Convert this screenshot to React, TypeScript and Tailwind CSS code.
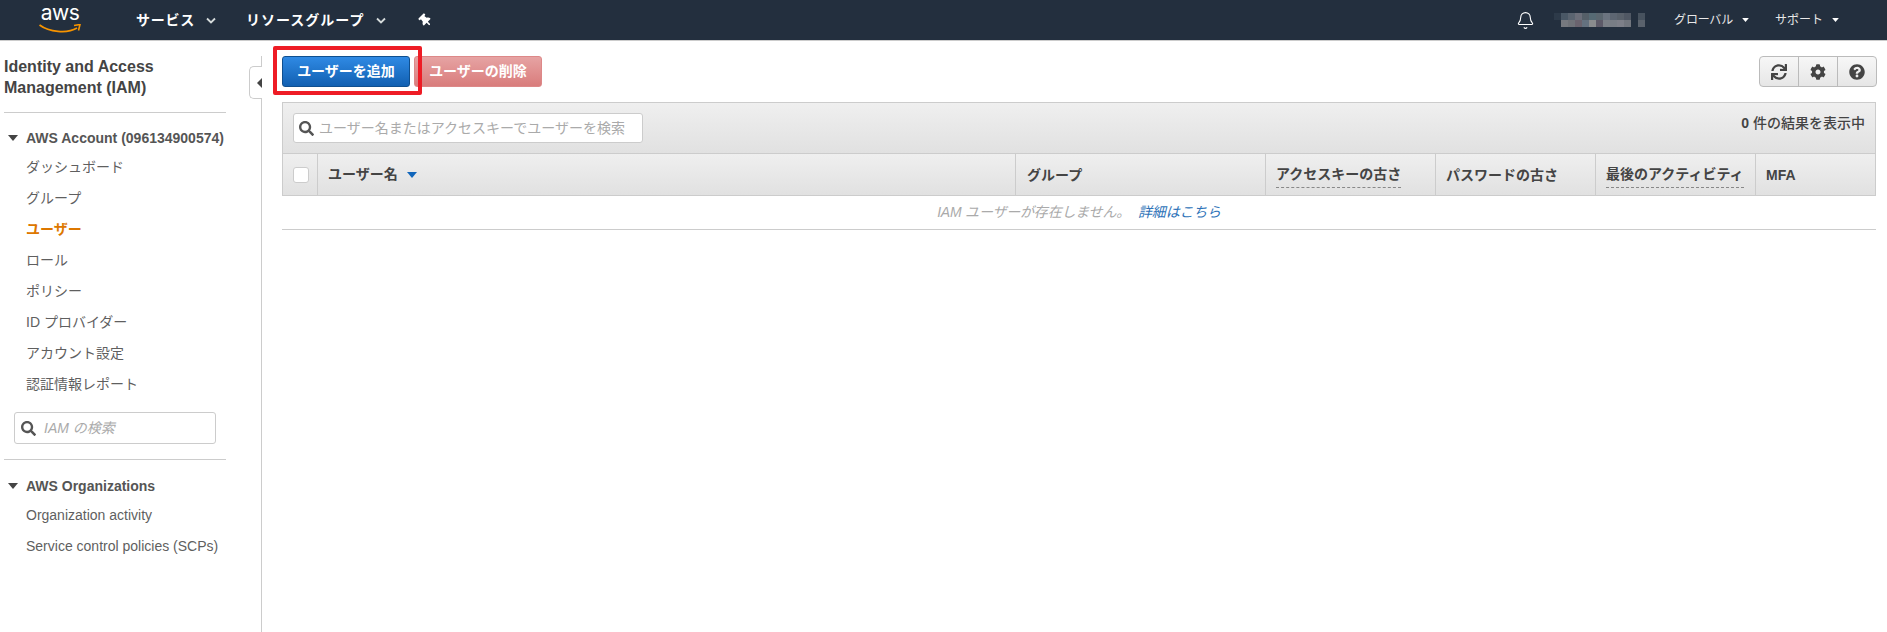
import React from "react";
import { FaSync, FaCog, FaQuestionCircle, FaSearch, FaThumbtack } from "react-icons/fa";
import { Bell } from "lucide-react";

const row1 = ["#2d3a49", "#4a5866", "#5a6470", "#6b6e79", "#555f68", "#566a74", "#5b6770", "#6b7480", "#5d6672", "#59616b", "#505864", "#232f3e", "#47525e"];
const row2 = ["#232f3e", "#76797f", "#6f7278", "#6a636e", "#64717f", "#8a8c8e", "#5d5a68", "#7b7f86", "#787d85", "#7d7f88", "#72767e", "#232f3e", "#5a626c"];

function Caret({ className }: { className: string }) {
  return (
    <svg width="10" height="6" viewBox="0 0 10 6" className={className}>
      <path d="M0 0 H10 L5 6 Z" fill="currentColor" />
    </svg>
  );
}

function Chevron() {
  return (
    <svg width="10" height="7" viewBox="0 0 10 7" className="text-[#d5dbdb]">
      <path d="M1 1.5 L5 5.5 L9 1.5" fill="none" stroke="currentColor" strokeWidth="1.8" />
    </svg>
  );
}

function Header() {
  return (
    <header className="flex h-[41px] items-center border-b border-[#ccc] bg-[#232f3e] text-white">
      <div className="ml-[39px] -mt-[5px] flex w-[42px] flex-col items-center">
        <span className="font-['Inter',sans-serif] text-[21px] leading-[24px] tracking-[-0.6px] text-white">aws</span>
        <svg width="42" height="10" viewBox="0 0 42 10" className="-mt-[1px]">
          <path d="M0.5 1 C10 8 28 10 38 4" fill="none" stroke="#f79400" strokeWidth="1.8" />
          <path d="M35 1.5 L41 0.5 L39.5 6.5" fill="none" stroke="#f79400" strokeWidth="1.6" />
        </svg>
      </div>
      <span className="ml-[55px] text-[14px] font-bold tracking-[0.75px] text-white">サービス</span>
      <span className="ml-[11px]"><Chevron /></span>
      <span className="ml-[30px] text-[14px] font-bold tracking-[1px] text-white">リソースグループ</span>
      <span className="ml-[12px]"><Chevron /></span>
      <FaThumbtack className="ml-[33px] -rotate-45 text-[13px] text-white" />
      <Bell size={19} strokeWidth={1.4} className="ml-auto text-white" />
      <svg width="91" height="14" viewBox="0 0 91 14" className="ml-[19px]">
        {row1.map((c, i) => <rect key={i} x={i * 7} y="0" width="7" height="7" fill={c} />)}
        {row2.map((c, i) => <rect key={i} x={i * 7} y="7" width="7" height="7" fill={c} />)}
      </svg>
      <span className="ml-[29px] text-[12px] tracking-[-0.2px] text-[#e8e8e8]">グローバル</span>
      <Caret className="ml-[9px] h-[4px] w-[7px] text-white" />
      <span className="ml-[26px] text-[12px] text-[#e8e8e8]">サポート</span>
      <Caret className="ml-[9px] mr-[48px] h-[4px] w-[7px] text-white" />
    </header>
  );
}

function NavItem({ label, active }: { label: string; active?: boolean }) {
  return (
    <div className={`flex h-[31px] items-center pl-[26px] text-[14px] ${active ? "font-bold text-[#dd7700]" : "text-[#5f5f5f]"}`}>
      {label}
    </div>
  );
}

function Sidebar() {
  return (
    <aside className="w-[261px] shrink-0 pt-[15px]">
      <div className="ml-[4px] w-[222px] pb-[14px] text-[16px] font-bold leading-[21px] text-[#444]">
        Identity and Access<br />Management (IAM)
      </div>
      <div className="ml-[4px] w-[222px] border-t border-[#ccc]" />
      <div className="flex h-[49px] items-center pl-[8px] pt-[1px] text-[14px] font-bold text-[#555]">
        <Caret className="mr-[8px] h-[6px] w-[10px] text-[#444]" />
        <span className="whitespace-nowrap">AWS Account (096134900574)</span>
      </div>
      <div className="-mt-[10px]">
        <NavItem label="ダッシュボード" />
        <NavItem label="グループ" />
        <NavItem label="ユーザー" active />
        <NavItem label="ロール" />
        <NavItem label="ポリシー" />
        <NavItem label="ID プロバイダー" />
        <NavItem label="アカウント設定" />
        <NavItem label="認証情報レポート" />
      </div>
      <div className="ml-[14px] mt-[12px] flex h-[32px] w-[202px] items-center rounded-[3px] border border-[#ccc] pl-[6px]">
        <FaSearch className="text-[15px] text-[#555]" />
        <span className="ml-[8px] text-[14px] italic text-[#aaa]">IAM の検索</span>
      </div>
      <div className="ml-[4px] mt-[15px] w-[222px] border-t border-[#ccc]" />
      <div className="flex h-[52px] items-center pl-[8px] text-[14px] font-bold text-[#555]">
        <Caret className="mr-[8px] h-[6px] w-[10px] text-[#444]" />
        <span>AWS Organizations</span>
      </div>
      <div className="-mt-[12px]">
        <NavItem label="Organization activity" />
        <NavItem label="Service control policies (SCPs)" />
      </div>
    </aside>
  );
}

function Col({ label, width, dashed, last, pad }: { label: string; width: string; dashed?: boolean; last?: boolean; pad?: string }) {
  return (
    <div className={`flex h-full items-center ${pad ?? "pl-[10px]"} ${width} ${last ? "" : "border-r border-[#ccc]"}`}>
      <span className={`text-[14px] font-bold leading-[20px] text-[#444] ${dashed ? "mt-[2px] border-b border-dashed border-[#888] pb-[3px]" : ""}`}>{label}</span>
    </div>
  );
}

function IconBtn({ children, last }: { children: React.ReactNode; last?: boolean }) {
  return (
    <div className={`flex h-full flex-1 items-center justify-center text-[16px] text-[#444] ${last ? "" : "border-r border-[#bbb]"}`}>
      {children}
    </div>
  );
}

function Main() {
  return (
    <main className="relative mt-[15px] h-[576px] flex-1 border-l border-[#ccc] pl-[20px] pr-[11px]">
      <div className="absolute -left-[13px] top-[10px] flex h-[33px] w-[13px] items-center justify-end rounded-l-[5px] border border-r-0 border-[#ccc] bg-white">
        <svg width="5" height="10" viewBox="0 0 5 10" className="text-[#444]"><path d="M5 0 V10 L0 5 Z" fill="currentColor" /></svg>
      </div>
      <div className="flex h-[46px] items-start justify-between">
        <div className="relative flex gap-[4px]">
          <div className="flex h-[31px] w-[128px] items-center justify-center rounded-[3px] border border-[#0f4f8f] bg-gradient-to-b from-[#2f8ae4] to-[#1160b2] text-[14px] font-bold text-white">
            ユーザーを追加
          </div>
          <div className="flex h-[31px] w-[128px] items-center justify-center rounded-[3px] border border-[#d88] bg-gradient-to-b from-[#e6a3a3] to-[#d97c7c] text-[14px] font-bold text-[#fff]">
            ユーザーの削除
          </div>
          <div className="absolute -left-[9px] -top-[10px] h-[49px] w-[149px] rounded-[2px] border-[4px] border-[#ee1c25]" />
        </div>
        <div className="-mr-[1px] flex h-[31px] w-[118px] rounded-[4px] border border-[#bbb] bg-gradient-to-b from-[#f7f7f7] to-[#e6e6e6]">
          <IconBtn><FaSync /></IconBtn>
          <IconBtn><FaCog /></IconBtn>
          <IconBtn last><FaQuestionCircle className="text-[16px]" /></IconBtn>
        </div>
      </div>
      <div className="border border-[#ccc]">
        <div className="flex h-[51px] items-start justify-between border-b border-[#ccc] bg-gradient-to-b from-[#efefef] to-[#e1e1e1] pl-[10px] pr-[10px] pt-[10px]">
          <div className="flex h-[30px] w-[350px] items-center rounded-[3px] border border-[#ccc] bg-white pl-[5px]">
            <FaSearch className="text-[15px] text-[#555]" />
            <span className="ml-[5px] text-[14px] text-[#aaa]">ユーザー名またはアクセスキーでユーザーを検索</span>
          </div>
          <span className="text-[14px] font-bold leading-[20px] text-[#444]">0 <span className="font-medium">件の結果を表示中</span></span>
        </div>
        <div className="flex h-[41px] bg-gradient-to-b from-[#efefef] to-[#e1e1e1]">
          <div className="flex h-full w-[35px] items-center justify-center border-r border-[#ccc] pl-[1px]">
            <div className="h-[16px] w-[16px] rounded-[3px] border border-[#ccc] bg-white" />
          </div>
          <div className="flex h-full w-[698px] items-center gap-[9px] border-r border-[#ccc] pl-[10px]">
            <span className="text-[14px] font-bold text-[#444]">ユーザー名</span>
            <Caret className="h-[6px] w-[10px] text-[#1166bb]" />
          </div>
          <Col label="グループ" width="w-[250px]" pad="pl-[11px]" />
          <Col label="アクセスキーの古さ" width="w-[170px]" dashed />
          <Col label="パスワードの古さ" width="w-[160px]" />
          <Col label="最後のアクティビティ" width="w-[160px]" dashed />
          <Col label="MFA" width="flex-1" last />
        </div>
      </div>
      <div className="flex h-[34px] items-center justify-center border-b border-[#ccc] text-[14px] italic tracking-[-0.2px] text-[#aaa]">
        IAM ユーザーが存在しません。<span className="ml-[8px] text-[#2e73b8]">詳細はこちら</span>
      </div>
    </main>
  );
}

export default function App() {
  return (
    <div className="h-[632px] w-[1887px] overflow-hidden bg-white font-['Liberation_Sans','Noto_Sans_CJK_JP',sans-serif]">
      <Header />
      <div className="flex">
        <Sidebar />
        <Main />
      </div>
    </div>
  );
}
